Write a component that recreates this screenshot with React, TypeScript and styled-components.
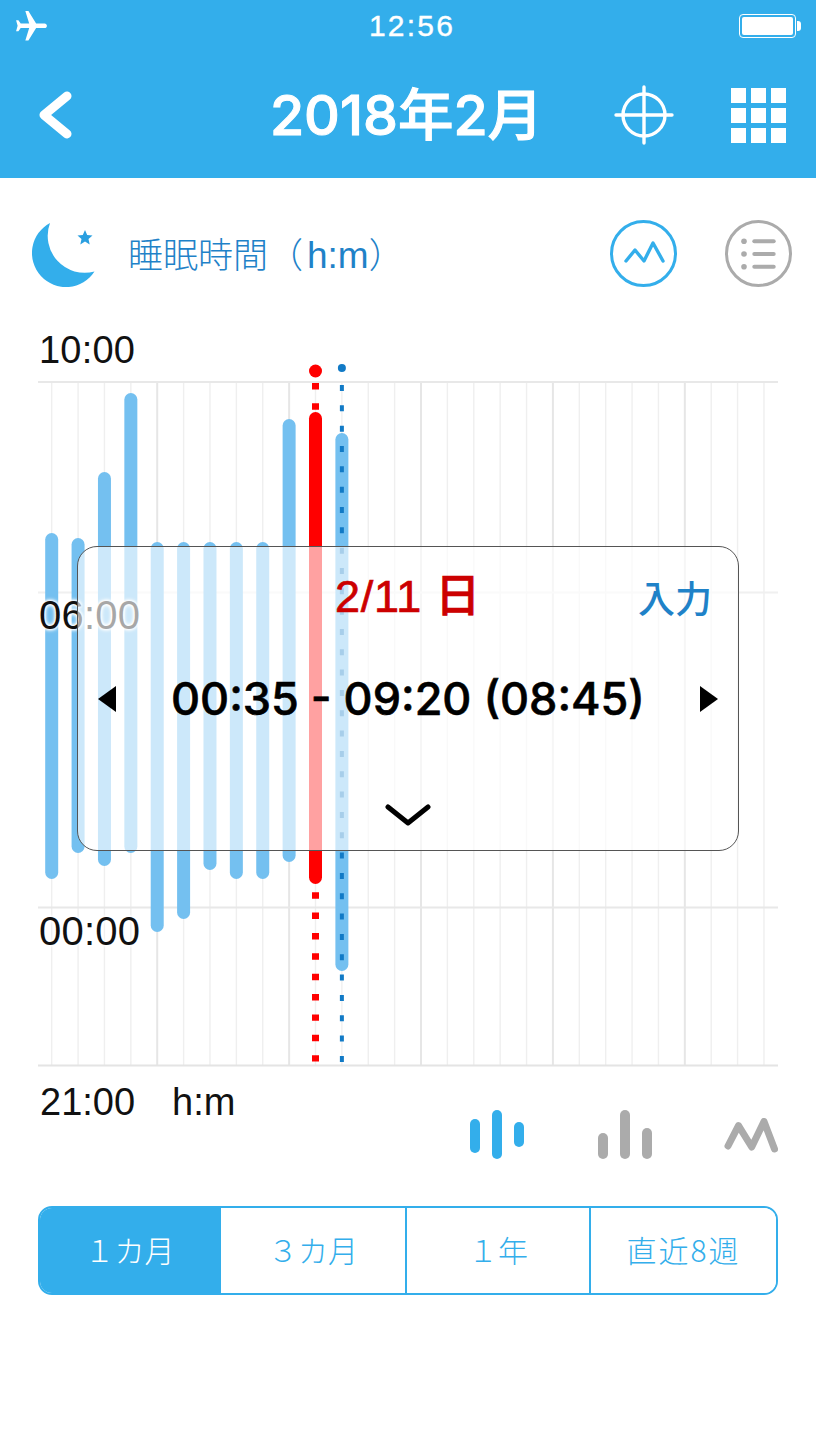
import React from "react";
import styled, { createGlobalStyle } from "styled-components";

const SANS = `"Liberation Sans", "Noto Sans CJK JP", sans-serif`;
const BOLD = `Inter, "Noto Sans CJK JP", sans-serif`;
const BLUE = "#33aeeb";
const GREY = "#ababab";

const Global = createGlobalStyle`
  html, body { margin: 0; padding: 0; background: #fff; }
  body { font-family: ${SANS}; }
  * { box-sizing: border-box; }
`;

const Page = styled.div`
  width: 816px;
  height: 1448px;
  overflow: hidden;
  display: flex;
  flex-direction: column;
  background: #fff;
`;

const Header = styled.header`
  height: 178px;
  background: ${BLUE};
  color: #fff;
  display: flex;
  flex-direction: column;
`;

const StatusBar = styled.div`
  height: 52px;
  padding: 0 14px 0 13px;
  display: grid;
  grid-template-columns: 1fr auto 1fr;
  align-items: center;
`;

const Clock = styled.div`
  font: 500 30px/1 ${SANS};
  letter-spacing: 2.2px;
  text-align: center;
  margin-left: 9px;
  -webkit-text-stroke: 0.4px #fff;
`;

const Battery = styled.div`
  justify-self: end;
  position: relative;
  width: 57px;
  height: 24px;
  border: 1.2px solid #fff;
  border-radius: 4px;
  padding: 2px;
  margin-right: 6px;
  &::before {
    content: "";
    display: block;
    width: 100%;
    height: 100%;
    background: #fff;
    border-radius: 2px;
  }
  &::after {
    content: "";
    position: absolute;
    right: -6px;
    top: 6px;
    width: 4px;
    height: 10px;
    background: #fff;
    border-radius: 0 3px 3px 0;
  }
`;

const Nav = styled.div`
  flex: 1;
  display: grid;
  grid-template-columns: 161px 1fr 172px;
  align-items: center;
  padding: 0 30px 0 38px;
`;

const NavTitle = styled.h1`
  margin: 0;
  font: 500 55.5px/1 ${BOLD};
  -webkit-text-stroke: 1px #fff;
  text-align: center;
  white-space: nowrap;
`;

const NavActions = styled.div`
  display: flex;
  justify-content: flex-end;
  align-items: center;
  gap: 57px;
`;

const TileGrid = styled.div`
  display: grid;
  grid-template-columns: repeat(3, 15px);
  grid-auto-rows: 15px;
  gap: 5px;
  span { background: #fff; }
`;

const SectionRow = styled.div`
  height: 110px;
  padding: 42px 24px 0 32px;
  display: flex;
  align-items: flex-start;
`;

const MoonSlot = styled.div`
  margin-top: 3px;
  height: 64px;
`;

const SectionTitle = styled.h2`
  margin: 16px 0 0 32px;
  font: 300 35px/40px ${SANS};
  color: #1f82c8;
  flex: 1;
  white-space: nowrap;
`;

const TitleUnit = styled.span`
  font-size: 37px;
  margin-left: 4px;
`;

const RoundButton = styled.div<{ $color: string }>`
  width: 67px;
  height: 67px;
  margin-left: 48px;
  border-radius: 50%;
  border: 3px solid ${(p) => p.$color};
  display: flex;
  align-items: center;
  justify-content: center;
`;

const ChartArea = styled.div`
  position: relative;
  height: 787px;
`;

const ChartSvg = styled.svg`
  display: block;
  width: 816px;
  height: 787px;
`;

const AxisLabel = styled.span<{ $top: number; $halo?: boolean }>`
  position: absolute;
  left: 39px;
  top: ${(p) => p.$top}px;
  font: 400 ${(p) => (p.$halo ? 40 : 38)}px/44px ${SANS};
  letter-spacing: 0.2px;
  color: #111;
  text-shadow: ${(p) =>
    p.$halo ? "0 0 3px #fff, 0 0 3px #fff, 0 0 4px #fff, 0 0 5px #fff" : "none"};
`;

const Popup = styled.div`
  position: absolute;
  left: 77px;
  top: 258px;
  width: 662px;
  height: 305px;
  border: 1px solid #555;
  border-radius: 20px;
  background: rgba(255, 255, 255, 0.63);
  display: flex;
  flex-direction: column;
  padding: 24px 20px 0 20px;
`;

const PopupHead = styled.div`
  display: grid;
  grid-template-columns: 1fr auto 1fr;
  align-items: center;
  height: 52px;
`;

const DateLabel = styled.div`
  grid-column: 2;
  font: 500 45px/52px ${SANS};
  letter-spacing: 0.7px;
  -webkit-text-stroke: 0.7px #cc0000;
  color: #cc0000;
  white-space: nowrap;
`;

const InputLink = styled.div`
  justify-self: end;
  margin-right: 6px;
  font: 500 37px/52px "Noto Sans CJK JP", sans-serif;
  color: #1f82c8;
`;

const TimeRow = styled.div`
  margin-top: 50px;
  height: 52px;
  display: flex;
  align-items: center;
  justify-content: space-between;
`;

const TimeText = styled.div`
  font: 500 45px/52px ${BOLD};
  -webkit-text-stroke: 0.6px #000;
  color: #000;
  white-space: nowrap;
`;

const ChevronRow = styled.div`
  margin-top: 79px;
  display: flex;
  justify-content: center;
`;

const ChartFooter = styled.div`
  height: 131px;
  padding: 5px 38px 0 40px;
  display: flex;
  align-items: flex-start;
  justify-content: space-between;
`;

const FootText = styled.div`
  font: 400 38px/44px ${SANS};
  color: #111;
  display: flex;
  gap: 37px;
`;

const Modes = styled.div`
  margin-top: 30px;
  display: flex;
  align-items: flex-start;
  gap: 72px;
`;

const ModeSlot = styled.div<{ $top?: number; $left?: number }>`
  margin-top: ${(p) => p.$top ?? 0}px;
  margin-left: ${(p) => p.$left ?? 0}px;
  svg { display: block; }
`;

const Segments = styled.div`
  margin: 0 38px;
  height: 89px;
  border: 2px solid ${BLUE};
  border-radius: 14px;
  overflow: hidden;
  display: grid;
  grid-template-columns: 179px 186px 184px 1fr;
`;

const Segment = styled.div<{ $active?: boolean; $wide?: boolean }>`
  display: flex;
  align-items: center;
  justify-content: center;
  padding-bottom: 3px;
  font: 300 30px/1 "Noto Sans CJK JP", sans-serif;
  letter-spacing: ${(p) => (p.$wide ? "2px" : "0")};
  color: ${(p) => (p.$active ? "#fff" : BLUE)};
  background: ${(p) => (p.$active ? BLUE : "#fff")};
  & + & { border-left: 2px solid ${BLUE}; }
`;

const Plane = () => (
  <svg width="37" height="37" viewBox="0 0 24 24" fill="#fff">
    <path
      transform="rotate(90 12 12)"
      d="M21 16v-2l-8-5V3.5c0-.83-.67-1.5-1.5-1.5S10 2.67 10 3.5V9l-8 5v2l8-2.5V19l-2 1.5V22l3.5-1 3.5 1v-1.5L13 19v-5.5l8 2.5z"
    />
  </svg>
);

const BackIcon = () => (
  <svg width="34" height="50" viewBox="0 0 34 50">
    <path d="M29 6 L6 25 L29 44" fill="none" stroke="#fff" strokeWidth="9" strokeLinecap="round" strokeLinejoin="round" />
  </svg>
);

const TargetIcon = () => (
  <svg width="60" height="60" viewBox="0 0 60 60" fill="none" stroke="#fff" strokeWidth="3.4" strokeLinecap="round">
    <circle cx="30" cy="30" r="21" />
    <path d="M30 2 V58 M2 30 H58" />
  </svg>
);

const Moon = () => (
  <svg width="64" height="64" viewBox="0 0 64 64">
    <path d="M18 0 A34 34 0 1 0 62.5 48.500 A37 37 0 0 1 18 0 Z" fill={BLUE} />
    <path
      d="M53 7 l2.2 5 5.3.5-4 3.6 1.2 5.3-4.7-2.8-4.7 2.8 1.2-5.3-4-3.6 5.3-.5 z"
      fill="#2a9fe0"
    />
  </svg>
);

const LineModeIcon = () => (
  <svg width="44" height="30" viewBox="0 0 44 30" fill="none" stroke={BLUE} strokeWidth="3.4" strokeLinecap="round" strokeLinejoin="round">
    <path d="M4 22 L13 11 L22 22 L31 4 L41 22" />
  </svg>
);

const ListIcon = () => (
  <svg width="44" height="36" viewBox="0 0 44 36" fill={GREY}>
    <circle cx="7" cy="5.300" r="2.800" />
    <circle cx="7" cy="18" r="2.800" />
    <circle cx="7" cy="30.700" r="2.800" />
    <rect x="15.300" y="3.300" width="23.400" height="4" rx="2" />
    <rect x="15.300" y="16" width="23.400" height="4" rx="2" />
    <rect x="15.300" y="28.700" width="23.400" height="4" rx="2" />
  </svg>
);

const Triangle = ({ dir }: { dir: "l" | "r" }) => (
  <svg width="18" height="26" viewBox="0 0 18 26">
    <path d={dir === "l" ? "M18 0 V26 L0 13 Z" : "M0 0 V26 L18 13 Z"} fill="#000" />
  </svg>
);

const Chevron = () => (
  <svg width="46" height="24" viewBox="0 0 46 24" fill="none" stroke="#000" strokeWidth="5" strokeLinecap="round" strokeLinejoin="round">
    <path d="M3 3 L23 19 L43 3" />
  </svg>
);

const RangeBarsIcon = () => (
  <svg width="54" height="49" viewBox="0 0 54 49" fill={BLUE}>
    <rect x="0" y="9" width="10" height="34" rx="5" />
    <rect x="22" y="0" width="10" height="49" rx="5" />
    <rect x="44" y="12" width="10" height="25" rx="5" />
  </svg>
);

const BarsIcon = () => (
  <svg width="54" height="49" viewBox="0 0 54 49" fill={GREY}>
    <rect x="0" y="23" width="10" height="26" rx="5" />
    <rect x="22" y="0" width="10" height="49" rx="5" />
    <rect x="44" y="18" width="10" height="31" rx="5" />
  </svg>
);

const PeaksIcon = () => (
  <svg width="54" height="36" viewBox="0 0 54 36" fill="none" stroke={GREY} strokeWidth="7" strokeLinecap="round" strokeLinejoin="round">
    <path d="M4 28 L14.500 7.700 L27.700 29 L40 3.500 L50.500 31" />
  </svg>
);

const SPACING = 26.38;
const X0 = 51.7;
const colX = (i: number) => X0 + i * SPACING;
const BARS: [number, number][] = [
  [533, 879], [538, 853], [472, 866], [393, 853], [542, 932], [542, 919],
  [542, 870], [542, 879], [542, 879], [419, 862],
];

const Chart = () => (
  <ChartSvg viewBox="0 288 816 787">
    {Array.from({ length: 28 }, (_, i) => (
      <line
        key={i}
        x1={colX(i)}
        x2={colX(i)}
        y1={382}
        y2={1065}
        stroke={(i + 1) % 5 === 0 ? "#e6e6e6" : "#efefef"}
        strokeWidth={(i + 1) % 5 === 0 ? 2 : 1.4}
      />
    ))}
    <line x1="38" x2="778" y1="382" y2="382" stroke="#e8e8e8" strokeWidth="2" />
    <line x1="38" x2="778" y1="592.500" y2="592.500" stroke="#f0f0f0" strokeWidth="2" />
    <line x1="38" x2="778" y1="907.500" y2="907.500" stroke="#e8e8e8" strokeWidth="2" />
    <line x1="38" x2="778" y1="1065.500" y2="1065.500" stroke="#e4e4e4" strokeWidth="2" />
    {BARS.map(([top, bottom], i) => (
      <rect key={i} x={colX(i) - 6.5} y={top} width="13" height={bottom - top} rx="6.5" fill="#74c0f0" />
    ))}
    <rect x={colX(10) - 6.5} y="412" width="13" height="472" rx="6.5" fill="#ff0000" />
    <rect x={colX(11) - 6.5} y="433" width="13" height="538" rx="6.5" fill="#74c0f0" />
    <line x1={colX(10)} x2={colX(10)} y1="383" y2="1063" stroke="#ff0000" strokeWidth="7" strokeDasharray="6.4 13.97" />
    <circle cx={colX(10)} cy="371" r="6.500" fill="#ff0000" />
    <line x1={colX(11)} x2={colX(11)} y1="385" y2="1063" stroke="#117ac6" strokeWidth="4" strokeDasharray="6 14.33" />
    <circle cx={colX(11)} cy="368" r="4" fill="#117ac6" />
  </ChartSvg>
);

export default function App() {
  return (
    <Page>
      <Global />
      <Header>
        <StatusBar>
          <Plane />
          <Clock>12:56</Clock>
          <Battery />
        </StatusBar>
        <Nav>
          <BackIcon />
          <NavTitle>2018年2月</NavTitle>
          <NavActions>
            <TargetIcon />
            <TileGrid>
              {Array.from({ length: 9 }, (_, i) => (
                <span key={i} />
              ))}
            </TileGrid>
          </NavActions>
        </Nav>
      </Header>

      <SectionRow>
        <MoonSlot>
          <Moon />
        </MoonSlot>
        <SectionTitle>
          睡眠時間（<TitleUnit>h:m</TitleUnit>）
        </SectionTitle>
        <RoundButton $color={BLUE}>
          <LineModeIcon />
        </RoundButton>
        <RoundButton $color={GREY}>
          <ListIcon />
        </RoundButton>
      </SectionRow>

      <ChartArea>
        <Chart />
        <AxisLabel $top={40}>10:00</AxisLabel>
        <AxisLabel $top={305} $halo>06:00</AxisLabel>
        <AxisLabel $top={621} $halo>00:00</AxisLabel>
        <Popup>
          <PopupHead>
            <DateLabel>2/11 日</DateLabel>
            <InputLink>入力</InputLink>
          </PopupHead>
          <TimeRow>
            <Triangle dir="l" />
            <TimeText>00:35 - 09:20 (08:45)</TimeText>
            <Triangle dir="r" />
          </TimeRow>
          <ChevronRow>
            <Chevron />
          </ChevronRow>
        </Popup>
      </ChartArea>

      <ChartFooter>
        <FootText>
          <span>21:00</span>
          <span>h:m</span>
        </FootText>
        <Modes>
          <ModeSlot>
            <RangeBarsIcon />
          </ModeSlot>
          <ModeSlot $left={2}>
            <BarsIcon />
          </ModeSlot>
          <ModeSlot $top={8}>
            <PeaksIcon />
          </ModeSlot>
        </Modes>
      </ChartFooter>

      <Segments>
        <Segment $active>１カ月</Segment>
        <Segment>３カ月</Segment>
        <Segment>１年</Segment>
        <Segment $wide>直近8週</Segment>
      </Segments>
    </Page>
  );
}
